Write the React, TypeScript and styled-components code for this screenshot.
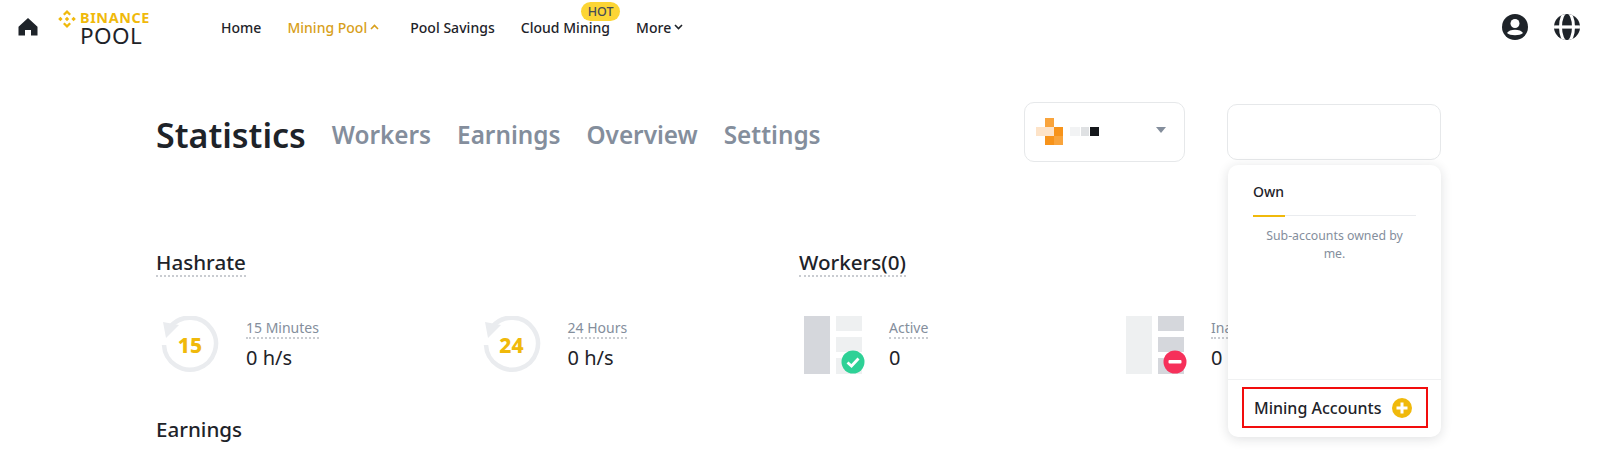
import React from 'react';
import styled, { createGlobalStyle } from 'styled-components';

const Global = createGlobalStyle`
  html, body { margin: 0; padding: 0; background: #fff; }
  body { font-family: "Noto Sans", "Open Sans", sans-serif; color: #1e2329; }
  * { box-sizing: border-box; }
`;
const Page = styled.div`width: 1600px; height: 460px; overflow: hidden; position: relative; background: #fff;`;
const Header = styled.header`display: flex; align-items: center; height: 54px; padding: 0 19px 0 18px;`;
const HomeBtn = styled.svg`width: 20px; height: 20px; flex: none; color: #1e2329;`;
const Logo = styled.div`display: flex; flex-direction: column; margin: 2px 0 0 20px; width: 92px; flex: none; position: relative; padding-left: 22px;`;
const LogoMark = styled.svg`position: absolute; left: 0; top: -1px; width: 18px; height: 18px;`;
const LogoTop = styled.span`font-size: 14.4px; line-height: 14px; font-weight: 700; letter-spacing: .6px; color: #f0b90b; white-space: nowrap;`;
const LogoBottom = styled.span`font-size: 22.5px; line-height: 21px; font-weight: 400; color: #1e2329; letter-spacing: .4px;`;
const Nav = styled.nav`display: flex; align-items: center; gap: 26px; margin-left: 71px; flex: 1;`;
const NavItem = styled.a<{ $active?: boolean }>`
  position: relative; display: inline-flex; align-items: center; gap: 3px; font-size: 14px; font-weight: 500;
  letter-spacing: ${p => (p.$active ? '0' : '.03px')};
  margin-right: ${p => (p.$active ? '5px' : '0')};
  color: ${p => (p.$active ? '#d89f1b' : '#1e2329')};
`;
const Hot = styled.span`
  position: absolute; top: -16px; right: -10px; height: 19px; width: 39px; border-radius: 10px; background: #fcd535;
  font-size: 12.5px; line-height: 19px; text-align: center; font-weight: 500; color: #474d57;
`;
const HeaderIcons = styled.div`display: flex; align-items: center; gap: 24px;`;
const Main = styled.main`padding: 48px 159px 0 156px; position: relative;`;
const TitleRow = styled.div`display: flex; align-items: center; height: 60px;`;
const Title = styled.h1`margin: 6px 26px 0 0; font-size: 34px; line-height: 40px; font-weight: 600; color: #1e2329;`;
const Tab = styled.a`font-size: 24.3px; line-height: 32px; font-weight: 600; color: #848e9c; margin: 6px 26px 0 0;`;
const Spacer = styled.div`flex: 1;`;
const Select = styled.div`
  width: 161px; height: 60px; border: 1px solid #e6e8ea; border-radius: 10px; display: flex; align-items: center;
  padding: 0 18px 0 11px; justify-content: space-between; margin-right: 42px;
`;
const Avatar = styled.svg`width: 64px; height: 28px; flex: none;`;
const Caret = styled.span`width: 0; height: 0; border-left: 5px solid transparent; border-right: 5px solid transparent; border-top: 6px solid #848e9c; margin-bottom: 4px;`;
const SearchBox = styled.div`width: 214px; height: 56px; border: 1px solid #e6e8ea; border-radius: 10px; background: #fff;`;
const Columns = styled.div`display: grid; grid-template-columns: 643px 1fr; margin-top: 87px;`;
const Section = styled.section``;
const SectionTitle = styled.h2`
  display: inline-block; margin: 0; font-size: 20.6px; line-height: 26px; font-weight: 500; color: #1e2329;
  border-bottom: 2px dotted #c9ccd1;
`;
const Stats = styled.div`display: flex; margin-top: 39px;`;
const Stat = styled.div`display: flex; align-items: center; width: 322px; height: 58px;`;
const IconWrap = styled.div`position: relative; width: 90px; flex: none; height: 58px;`;
const ClockSvg = styled.svg`display: block; margin-left: 5px;`;
const WorkerSvg = styled.svg`display: block; margin-left: 5px;`;
const StatNum = styled.span`
  position: absolute; left: 5px; top: 0; width: 58px; text-align: center; font-size: 21px; line-height: 58px; font-weight: 800; color: #f0b90b;
`;
const StatBody = styled.div`display: flex; flex-direction: column; align-items: flex-start;`;
const StatLabel = styled.span`font-size: 14px; line-height: 18px; color: #848e9c; border-bottom: 2px dotted #c9ccd1;`;
const StatValue = styled.span`font-size: 20px; line-height: 26px; margin-top: 6px; color: #1e2329;`;
const Earnings = styled.h2`margin: 42px 0 0; font-size: 20.6px; line-height: 26px; font-weight: 500; color: #1e2329;`;
const Menu = styled.div`
  position: absolute; left: 1228px; top: 165px; width: 213px; height: 272px; background: #fff; border-radius: 10px;
  box-shadow: 0 2px 12px rgba(30,35,41,.14); display: flex; flex-direction: column; padding: 15px 0 0;
`;
const MenuTabs = styled.div`margin: 0 25px; border-bottom: 1px solid #eaecef; height: 36px;`;
const MenuTab = styled.span`display: inline-block; height: 36px; font-size: 14px; line-height: 22px; font-weight: 500; color: #1e2329; border-bottom: 2px solid #f0b90b; width: 32px;`;
const MenuText = styled.p`margin: 11px 30px 0; font-size: 12.3px; line-height: 18px; color: #848e9c; text-align: center; flex: 1;`;
const MenuFooter = styled.div`border-top: 1px solid #f0f1f2; padding: 7px 13px 9px 14px;`;
const AddBtn = styled.div`
  height: 41px; border: 2px solid #f20d0d; display: flex; align-items: center; justify-content: space-between;
  padding: 0 14px 0 10px; font-size: 16px; font-weight: 500; color: #1e2329;
`;

const Clock = () => (
  <ClockSvg width="58" height="58" viewBox="0 0 58 58">
    <path d="M9 11 A26 26 0 1 1 3 29" fill="none" stroke="#eaecef" strokeWidth="4.5" />
    <path d="M2 6 L18 9 L5 22 Z" fill="#eaecef" />
  </ClockSvg>
);

const Worker = ({ active }: { active: boolean }) => {
  const a = active ? '#d5d7dc' : '#eef0f1';
  const b = active ? '#eef0f1' : '#d5d7dc';
  return (
    <WorkerSvg width="62" height="58" viewBox="0 0 62 58">
      <rect x="0" y="0" width="26" height="58" fill={a} />
      <rect x="32" y="0" width="26" height="15" fill={b} />
      <rect x="32" y="21" width="26" height="15" fill={b} />
      <rect x="32" y="42" width="26" height="16" fill={b} />
      <circle cx="49" cy="46" r="11.5" fill={active ? '#2ed196' : '#f6305a'} />
      {active ? (
        <path d="M43.5 46.5 L47.5 50 L54.5 42.5" fill="none" stroke="#fff" strokeWidth="2.8" />
      ) : (
        <rect x="42.5" y="44" width="13" height="3.6" rx="1" fill="#fff" />
      )}
    </WorkerSvg>
  );
};

const Chevron = ({ up }: { up?: boolean }) => (
  <svg width="9" height="6" viewBox="0 0 9 6"><path d={up ? 'M1 5 L4.5 1.5 L8 5' : 'M1 1 L4.5 4.5 L8 1'} fill="none" stroke="currentColor" strokeWidth="1.6" /></svg>
);

export default function App() {
  return (
    <Page>
      <Global />
      <Header>
        <HomeBtn viewBox="0 0 20 20"><path d="M10 1 L19.5 9.8 V18.5 H13 V13 H7 V18.5 H.5 V9.8 Z" fill="currentColor" /></HomeBtn>
        <Logo>
          <LogoMark viewBox="0 0 18 18">
            <g fill="#f0b90b">
              <path d="M9 0 L13 4 L11.4 5.6 L9 3.2 L6.6 5.6 L5 4 Z" />
              <path d="M9 18 L5 14 L6.6 12.4 L9 14.8 L11.4 12.4 L13 14 Z" />
              <path d="M9 6.8 L11.2 9 L9 11.2 L6.8 9 Z" />
              <path d="M2.4 6.8 L4.6 9 L2.4 11.2 L.2 9 Z" />
              <path d="M15.6 6.8 L17.8 9 L15.6 11.2 L13.4 9 Z" />
            </g>
          </LogoMark>
          <LogoTop>BINANCE</LogoTop>
          <LogoBottom>POOL</LogoBottom>
        </Logo>
        <Nav>
          <NavItem>Home</NavItem>
          <NavItem $active>Mining Pool <Chevron up /></NavItem>
          <NavItem>Pool Savings</NavItem>
          <NavItem>Cloud Mining<Hot>HOT</Hot></NavItem>
          <NavItem>More <Chevron /></NavItem>
        </Nav>
        <HeaderIcons>
          <svg width="28" height="28" viewBox="0 0 28 28">
            <circle cx="14" cy="14" r="13" fill="#1e2329" />
            <circle cx="14" cy="10.5" r="4.5" fill="#fff" />
            <path d="M6 20 C8 15.5 20 15.5 22 20 C19 23 9 23 6 20 Z" fill="#fff" />
          </svg>
          <svg width="28" height="28" viewBox="0 0 28 28">
            <defs><clipPath id="g"><circle cx="14" cy="14" r="13" /></clipPath></defs>
            <g clipPath="url(#g)">
              <rect width="28" height="28" fill="#1e2329" />
              <rect y="12.4" width="28" height="3.2" fill="#fff" />
              <ellipse cx="14" cy="14" rx="6.5" ry="15" fill="none" stroke="#fff" strokeWidth="3" />
            </g>
          </svg>
        </HeaderIcons>
      </Header>
      <Main>
        <TitleRow>
          <Title>Statistics</Title>
          <Tab>Workers</Tab>
          <Tab>Earnings</Tab>
          <Tab>Overview</Tab>
          <Tab>Settings</Tab>
          <Spacer />
          <Select>
            <Avatar viewBox="0 0 64 28">
              <rect x="9" width="9" height="9" fill="#f9a43c" />
              <rect y="9" width="18" height="9" fill="#fde3c8" />
              <rect x="18" y="9" width="9" height="9" fill="#f7931a" />
              <rect x="9" y="18" width="9" height="9" fill="#f7931a" />
              <rect x="18" y="18" width="9" height="9" fill="#f9a43c" />
              <rect x="34" y="9" width="10" height="9" fill="#f2f3f4" />
              <rect x="45" y="9" width="8" height="9" fill="#dfe1e3" />
              <rect x="54" y="9" width="9" height="9" fill="#15181c" />
            </Avatar>
            <Caret />
          </Select>
          <SearchBox />
        </TitleRow>
        <Columns>
          <Section>
            <SectionTitle>Hashrate</SectionTitle>
            <Stats>
              <Stat>
                <IconWrap><Clock /><StatNum>15</StatNum></IconWrap>
                <StatBody><StatLabel>15 Minutes</StatLabel><StatValue>0 h/s</StatValue></StatBody>
              </Stat>
              <Stat>
                <IconWrap><Clock /><StatNum>24</StatNum></IconWrap>
                <StatBody><StatLabel>24 Hours</StatLabel><StatValue>0 h/s</StatValue></StatBody>
              </Stat>
            </Stats>
          </Section>
          <Section>
            <SectionTitle>Workers(0)</SectionTitle>
            <Stats>
              <Stat>
                <IconWrap><Worker active /></IconWrap>
                <StatBody><StatLabel>Active</StatLabel><StatValue>0</StatValue></StatBody>
              </Stat>
              <Stat>
                <IconWrap><Worker active={false} /></IconWrap>
                <StatBody><StatLabel>Inactive</StatLabel><StatValue>0</StatValue></StatBody>
              </Stat>
            </Stats>
          </Section>
        </Columns>
        <Earnings>Earnings</Earnings>
      </Main>
      <Menu>
        <MenuTabs><MenuTab>Own</MenuTab></MenuTabs>
        <MenuText>Sub-accounts owned by me.</MenuText>
        <MenuFooter>
          <AddBtn>
            Mining Accounts
            <svg width="20" height="20" viewBox="0 0 20 20">
              <circle cx="10" cy="10" r="10" fill="#f0b90b" />
              <path d="M10 4.5 V15.5 M4.5 10 H15.5" stroke="#fff" strokeWidth="3" />
            </svg>
          </AddBtn>
        </MenuFooter>
      </Menu>
    </Page>
  );
}
